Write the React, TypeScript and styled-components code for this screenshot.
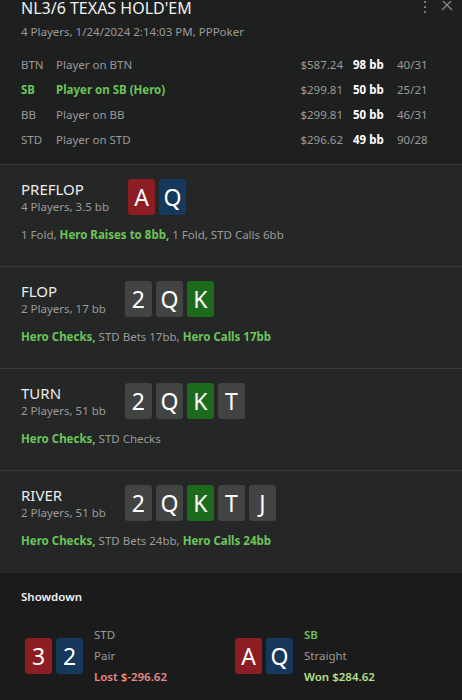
import styled, { createGlobalStyle } from 'styled-components';

const GlobalStyle = createGlobalStyle`
  html, body {
    margin: 0;
    padding: 0;
    background: #1e201f;
  }
  body {
    font-family: 'Noto Sans', 'Open Sans', sans-serif;
    color: #e8e8e8;
  }
`;

const Panel = styled.div`
  width: 462px;
  height: 700px;
  overflow: hidden;
  background: #1e201f;
`;

const Header = styled.div`
  padding: 0 21px 12px;
`;

const TitleRow = styled.div`
  display: flex;
  justify-content: space-between;
  align-items: flex-start;
  margin-top: -4px;
`;

const Title = styled.h1`
  margin: 0;
  font-size: 16px;
  font-weight: 400;
  line-height: 24px;
  color: #f0f0f0;
`;

const Actions = styled.div`
  display: flex;
  gap: 14px;
  margin-top: 5px;
  margin-right: -12px;
  color: #8a8a8a;
`;

const Subtitle = styled.div`
  font-size: 11.5px;
  line-height: 16px;
  color: #9a9a9a;
  margin-top: 4px;
`;

const PlayerGrid = styled.div`
  display: grid;
  grid-template-columns: 25px 1fr auto 34px 31px;
  column-gap: 10px;
  margin-top: 12px;
  padding-right: 13px;
`;

const Cell = styled.div<{ $hero?: boolean; $strong?: boolean; $right?: boolean }>`
  font-size: 11.5px;
  line-height: 25px;
  white-space: nowrap;
  color: ${({ $hero, $strong }) => ($hero ? '#6cc45a' : $strong ? '#ffffff' : '#9a9a9a')};
  font-weight: ${({ $hero, $strong }) => ($hero || $strong ? 700 : 400)};
  text-align: ${({ $right }) => ($right ? 'right' : 'left')};
`;

const Street = styled.section`
  background: #252726;
  border-top: 1px solid #383a39;
  padding: 14px 21px 23px;
`;

const StreetHead = styled.div`
  display: flex;
  align-items: center;
  gap: 19px;
`;

const StreetInfo = styled.div`
  display: flex;
  flex-direction: column;
`;

const StreetName = styled.div`
  font-size: 15px;
  line-height: 20px;
  color: #ececec;
`;

const StreetSub = styled.div`
  font-size: 11.5px;
  line-height: 16px;
  color: #9a9a9a;
`;

const Cards = styled.div`
  display: flex;
  gap: 4px;
`;

const suitColors: Record<string, string> = {
  h: '#8c1d22',
  d: '#15385c',
  s: '#424443',
  c: '#1c6b1c',
};

const Card = styled.div<{ $suit: string }>`
  width: 27px;
  height: 36px;
  border-radius: 3px;
  background: ${({ $suit }) => suitColors[$suit]};
  color: #ffffff;
  font-size: 23px;
  line-height: 36px;
  text-align: center;
`;

const ActionLine = styled.div`
  margin-top: 12px;
  font-size: 11.5px;
  line-height: 16px;
  color: #9a9a9a;
`;

const Hero = styled.span`
  color: #6cc45a;
  font-weight: 700;
`;

const Showdown = styled.section`
  background: #1b1b1b;
  border-top: 1px solid #2a2a2a;
  padding: 16px 21px 20px;
  height: 130px;
`;

const ShowdownTitle = styled.div`
  font-size: 11.5px;
  font-weight: 600;
  color: #f0f0f0;
  line-height: 16px;
`;

const Hands = styled.div`
  display: grid;
  grid-template-columns: 210px 1fr;
  margin-top: 19px;
`;

const Hand = styled.div`
  display: flex;
  align-items: center;
  gap: 11px;
  padding-left: 4px;
`;

const HandInfo = styled.div`
  display: flex;
  flex-direction: column;
`;

const HandLine = styled.div<{ $tone?: 'hero' | 'lost' | 'won' }>`
  font-size: 11.5px;
  line-height: 21px;
  color: ${({ $tone }) =>
    $tone === 'hero' ? '#6cc45a' : $tone === 'lost' ? '#e88a8a' : $tone === 'won' ? '#b8e08a' : '#9a9a9a'};
  font-weight: ${({ $tone }) => ($tone ? 600 : 400)};
`;

const players = [
  { pos: 'BTN', name: 'Player on BTN', stack: '$587.24', bb: '98 bb', stats: '40/31' },
  { pos: 'SB', name: 'Player on SB (Hero)', stack: '$299.81', bb: '50 bb', stats: '25/21', hero: true },
  { pos: 'BB', name: 'Player on BB', stack: '$299.81', bb: '50 bb', stats: '46/31' },
  { pos: 'STD', name: 'Player on STD', stack: '$296.62', bb: '49 bb', stats: '90/28' },
];

const board = [
  { r: '2', s: 's' },
  { r: 'Q', s: 's' },
  { r: 'K', s: 'c' },
  { r: 'T', s: 's' },
  { r: 'J', s: 's' },
];

const streets = [
  {
    name: 'PREFLOP',
    sub: '4 Players, 3.5 bb',
    cards: [{ r: 'A', s: 'h' }, { r: 'Q', s: 'd' }],
    action: (
      <>1 Fold, <Hero>Hero Raises to 8bb,</Hero> 1 Fold, STD Calls 6bb</>
    ),
  },
  {
    name: 'FLOP',
    sub: '2 Players, 17 bb',
    cards: board.slice(0, 3),
    action: (
      <><Hero>Hero Checks,</Hero> STD Bets 17bb, <Hero>Hero Calls 17bb</Hero></>
    ),
  },
  {
    name: 'TURN',
    sub: '2 Players, 51 bb',
    cards: board.slice(0, 4),
    action: (
      <><Hero>Hero Checks,</Hero> STD Checks</>
    ),
  },
  {
    name: 'RIVER',
    sub: '2 Players, 51 bb',
    cards: board,
    action: (
      <><Hero>Hero Checks,</Hero> STD Bets 24bb, <Hero>Hero Calls 24bb</Hero></>
    ),
  },
];

export default function App() {
  return (
    <>
      <GlobalStyle />
      <Panel>
        <Header>
          <TitleRow>
            <Title>NL3/6 TEXAS HOLD'EM</Title>
            <Actions>
              <svg width="4" height="14" viewBox="0 0 4 14" fill="currentColor">
                <circle cx="2" cy="1" r="1.1" />
                <circle cx="2" cy="6" r="1.1" />
                <circle cx="2" cy="11" r="1.1" />
              </svg>
              <svg width="12" height="12" viewBox="0 0 12 12" stroke="currentColor" strokeWidth="1.3">
                <path d="M1 -1 L11 9 M11 -1 L1 9" />
              </svg>
            </Actions>
          </TitleRow>
          <Subtitle>4 Players, 1/24/2024 2:14:03 PM, PPPoker</Subtitle>
          <PlayerGrid>
            {players.map((p) => (
              <>
                <Cell key={p.pos + 'a'} $hero={p.hero}>{p.pos}</Cell>
                <Cell key={p.pos + 'b'} $hero={p.hero}>{p.name}</Cell>
                <Cell key={p.pos + 'c'} $right>{p.stack}</Cell>
                <Cell key={p.pos + 'd'} $strong>{p.bb}</Cell>
                <Cell key={p.pos + 'e'}>{p.stats}</Cell>
              </>
            ))}
          </PlayerGrid>
        </Header>
        {streets.map((st) => (
          <Street key={st.name}>
            <StreetHead>
              <StreetInfo>
                <StreetName>{st.name}</StreetName>
                <StreetSub>{st.sub}</StreetSub>
              </StreetInfo>
              <Cards>
                {st.cards.map((c, i) => (
                  <Card key={i} $suit={c.s}>{c.r}</Card>
                ))}
              </Cards>
            </StreetHead>
            <ActionLine>{st.action}</ActionLine>
          </Street>
        ))}
        <Showdown>
          <ShowdownTitle>Showdown</ShowdownTitle>
          <Hands>
            <Hand>
              <Cards>
                <Card $suit="h">3</Card>
                <Card $suit="d">2</Card>
              </Cards>
              <HandInfo>
                <HandLine>STD</HandLine>
                <HandLine>Pair</HandLine>
                <HandLine $tone="lost">Lost $-296.62</HandLine>
              </HandInfo>
            </Hand>
            <Hand>
              <Cards>
                <Card $suit="h">A</Card>
                <Card $suit="d">Q</Card>
              </Cards>
              <HandInfo>
                <HandLine $tone="hero">SB</HandLine>
                <HandLine>Straight</HandLine>
                <HandLine $tone="won">Won $284.62</HandLine>
              </HandInfo>
            </Hand>
          </Hands>
        </Showdown>
      </Panel>
    </>
  );
}
